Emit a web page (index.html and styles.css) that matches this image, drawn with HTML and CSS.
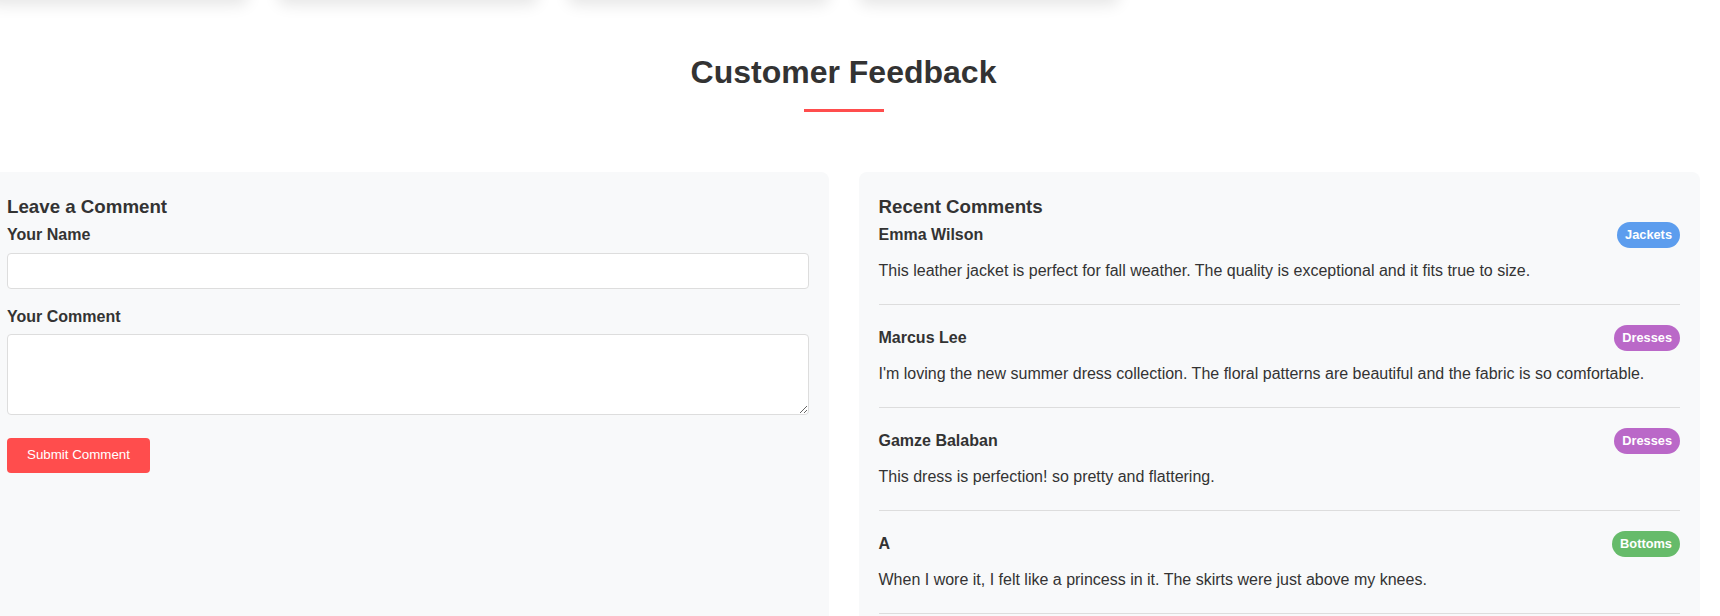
FILE: index.html
```html
<!DOCTYPE html>
<html lang="en">
<head>
<meta charset="utf-8">
<title>Customer Feedback</title>
<link rel="stylesheet" href="styles.css">
</head>
<body>
<div class="page">
  <div class="products-grid">
    <div class="product-card"></div>
    <div class="product-card"></div>
    <div class="product-card"></div>
    <div class="product-card"></div>
  </div>

  <section class="feedback">
    <h2 class="section-title">Customer Feedback</h2>
    <div class="feedback-grid">
      <div class="panel form-panel">
        <h3 class="panel-title">Leave a Comment</h3>
        <form class="comment-form">
          <div class="form-group">
            <label class="form-label" for="name">Your Name</label>
            <input class="form-input" id="name" type="text">
          </div>
          <div class="form-group">
            <label class="form-label" for="comment">Your Comment</label>
            <textarea class="form-textarea" id="comment"></textarea>
          </div>
          <button class="submit-btn" type="button">Submit Comment</button>
        </form>
      </div>

      <div class="panel comments-panel">
        <h3 class="panel-title">Recent Comments</h3>
        <div class="comment">
          <div class="comment-head">
            <span class="comment-name">Emma Wilson</span>
            <span class="badge badge-jackets">Jackets</span>
          </div>
          <p class="comment-text">This leather jacket is perfect for fall weather. The quality is exceptional and it fits true to size.</p>
        </div>
        <div class="comment">
          <div class="comment-head">
            <span class="comment-name">Marcus Lee</span>
            <span class="badge badge-dresses">Dresses</span>
          </div>
          <p class="comment-text">I'm loving the new summer dress collection. The floral patterns are beautiful and the fabric is so comfortable.</p>
        </div>
        <div class="comment">
          <div class="comment-head">
            <span class="comment-name">Gamze Balaban</span>
            <span class="badge badge-dresses">Dresses</span>
          </div>
          <p class="comment-text">This dress is perfection! so pretty and flattering.</p>
        </div>
        <div class="comment">
          <div class="comment-head">
            <span class="comment-name">A</span>
            <span class="badge badge-bottoms">Bottoms</span>
          </div>
          <p class="comment-text">When I wore it, I felt like a princess in it. The skirts were just above my knees.</p>
        </div>
      </div>
    </div>
  </section>
</div>
</body>
</html>
```

FILE: styles.css
```css
* {
  box-sizing: border-box;
}

html, body {
  margin: 0;
  padding: 0;
  background: #ffffff;
}

body {
  font-family: "Liberation Sans", Arial, sans-serif;
  color: #333333;
  line-height: 1.6;
  overflow-x: hidden;
}

.page {
  width: 1713px;
  margin-left: -13px;
}

.products-grid {
  display: grid;
  grid-template-columns: repeat(6, 1fr);
  gap: 30px;
  margin-top: -300px;
}

.product-card {
  height: 300px;
  background: #ffffff;
  border-radius: 8px;
  box-shadow: 0 5px 15px rgba(0, 0, 0, 0.1);
}

.feedback {
  padding: 0;
}

.section-title {
  margin: 47px 0 60px;
  font-size: 32px;
  line-height: 51px;
  font-weight: 700;
  text-align: center;
  color: #333333;
}

.section-title::after {
  content: "";
  display: block;
  width: 80px;
  height: 3px;
  margin: 11px auto 0;
  background: #ff4d4d;
}

.feedback-grid {
  display: grid;
  grid-template-columns: 1fr 1fr;
  gap: 30px;
}

.panel {
  background: #f8f9fa;
  border-radius: 8px;
  padding: 20px;
  min-height: 520px;
}

.panel-title {
  margin: 0;
  font-size: 18.72px;
  font-weight: 700;
  line-height: 30px;
  color: #333333;
}

.form-group {
  margin-bottom: 15px;
}

.form-label {
  display: block;
  font-size: 16px;
  font-weight: 700;
  line-height: 25.6px;
  margin-bottom: 5px;
}

.form-input,
.form-textarea {
  display: block;
  width: 100%;
  border: 1px solid #dddddd;
  border-radius: 4px;
  background: #ffffff;
  font-family: "Liberation Sans", Arial, sans-serif;
  font-size: 16px;
  padding: 8px;
  color: #333333;
}

.form-input {
  height: 36px;
}

.form-textarea {
  height: 81px;
  resize: vertical;
  margin-top: 1px;
}

.submit-btn {
  display: block;
  margin-top: 23px;
  padding: 10px 20px;
  border: none;
  border-radius: 4px;
  background: #ff4d4d;
  color: #ffffff;
  font-family: "Liberation Sans", Arial, sans-serif;
  font-size: 13.33px;
  line-height: 14.4px;
  cursor: pointer;
}

.comment {
  padding-bottom: 20px;
  margin-bottom: 20px;
  border-bottom: 1px solid #dddddd;
}

.comment-head {
  display: flex;
  justify-content: space-between;
  align-items: center;
  height: 26px;
  margin-bottom: 10px;
}

.comment-name {
  font-size: 16px;
  font-weight: 700;
  line-height: 26px;
}

.badge {
  display: inline-block;
  padding: 3px 8px;
  border-radius: 13px;
  font-size: 12.8px;
  font-weight: 700;
  line-height: 20px;
  color: #ffffff;
}

.badge-jackets {
  background: #5c9dee;
}

.badge-dresses {
  background: #ba68c8;
}

.badge-bottoms {
  background: #66bb6a;
}

.comment-text {
  margin: 0;
  font-size: 16px;
  line-height: 26px;
  color: #333333;
}
```
